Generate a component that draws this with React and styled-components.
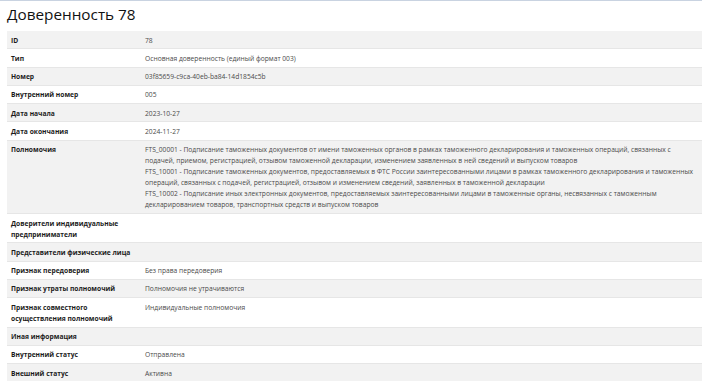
import React from "react";
import styled, { createGlobalStyle } from "styled-components";

const GlobalStyle = createGlobalStyle`
  html, body {
    margin: 0;
    padding: 0;
    background: #fff;
    overflow-x: hidden;
  }
  body {
    font-family: "Open Sans", "Noto Sans", sans-serif;
    border-top: 1px solid #c9d3e1;
  }
`;

const Page = styled.div`
  padding: 0 0 0 7px;
`;

const Title = styled.h1`
  margin: 0;
  padding: 3px 0 6px 0;
  font-size: 15.3px;
  font-weight: 400;
  line-height: 21px;
  color: #111;
`;

const Table = styled.table`
  width: 100%;
  border-collapse: collapse;
  font-size: 6.7px;
  line-height: 11px;
`;

const Row = styled.tr`
  border-top: 1px solid #e6e6e6;
  &:nth-child(odd) {
    background: #f2f2f2;
  }
  &:first-child {
    border-top: none;
  }
`;

const Label = styled.th`
  width: 128px;
  padding: 3.5px 3px 2.8px 4px;
  text-align: left;
  vertical-align: top;
  font-weight: 700;
  color: #1c1c1c;
`;

const Value = styled.td`
  padding: 3.5px 0 2.8px 3px;
  vertical-align: top;
  color: #4a4a4a;
`;

const Line = styled.div`
  white-space: nowrap;
`;

const rows = [
  ["ID", "78"],
  ["Тип", "Основная доверенность (единый формат 003)"],
  ["Номер", "03f85659-c9ca-40eb-ba84-14d1854c5b"],
  ["Внутренний номер", "005"],
  ["Дата начала", "2023-10-27"],
  ["Дата окончания", "2024-11-27"],
  [
    "Полномочия",
    [
      "FTS_00001 - Подписание таможенных документов от имени таможенных органов в рамках таможенного декларирования и таможенных операций, связанных с",
      "подачей, приемом, регистрацией, отзывом таможенной декларации, изменением заявленных в ней сведений и выпуском товаров",
      "FTS_10001 - Подписание таможенных документов, предоставляемых в ФТС России заинтересованными лицами в рамках таможенного декларирования и таможенных",
      "операций, связанных с подачей, регистрацией, отзывом и изменением сведений, заявленных в таможенной декларации",
      "FTS_10002 - Подписание иных электронных документов, предоставляемых заинтересованными лицами в таможенные органы, несвязанных с таможенным",
      "декларированием товаров, транспортных средств и выпуском товаров",
    ],
  ],
  ["Доверители индивидуальные предприниматели", ""],
  ["Представители физические лица", ""],
  ["Признак передоверия", "Без права передоверия"],
  ["Признак утраты полномочий", "Полномочия не утрачиваются"],
  ["Признак совместного осуществления полномочий", "Индивидуальные полномочия"],
  ["Иная информация", ""],
  ["Внутренний статус", "Отправлена"],
  ["Внешний статус", "Активна"],
];

const App = () => {
  return (
    <Page>
      <GlobalStyle />
      <Title>Доверенность 78</Title>
      <Table>
        <tbody>
          {rows.map(([label, value], index) => (
            <Row key={index}>
              <Label>{label}</Label>
              <Value>
                {Array.isArray(value)
                  ? value.map((line, i) => <Line key={i}>{line}</Line>)
                  : value}
              </Value>
            </Row>
          ))}
        </tbody>
      </Table>
    </Page>
  );
};

export default App;
